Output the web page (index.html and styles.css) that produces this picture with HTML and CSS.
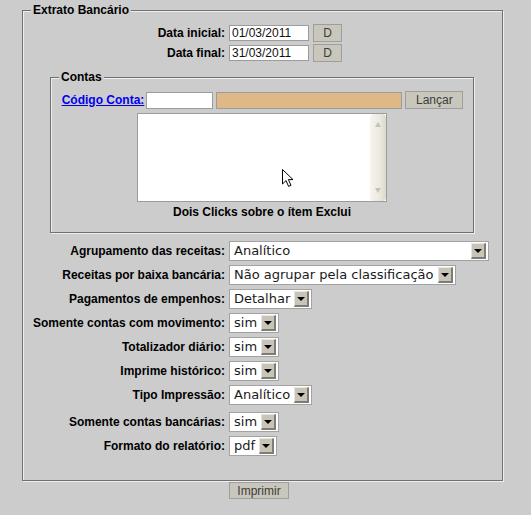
FILE: index.html
```html
<!DOCTYPE html>
<html lang="pt-BR">
<head>
<meta charset="utf-8">
<title>Extrato Bancário</title>
<link rel="stylesheet" href="styles.css">
</head>
<body>
<form class="page">
  <fieldset class="box box-main">
    <legend class="box-title">Extrato Bancário</legend>

    <div class="rows dates">
      <div class="row">
        <label class="lbl">Data inicial:</label>
        <div class="ctl">
          <input class="text-input date" value="01/03/2011">
          <button type="button" class="btn btn-d">D</button>
        </div>
      </div>
      <div class="row">
        <label class="lbl">Data final:</label>
        <div class="ctl">
          <input class="text-input date" value="31/03/2011">
          <button type="button" class="btn btn-d">D</button>
        </div>
      </div>
    </div>

    <fieldset class="box box-contas">
      <legend class="box-title">Contas</legend>
      <div class="conta-row">
        <a href="#" class="lnk">Código Conta:</a>
        <input class="text-input code" value="">
        <span class="text-input desc"></span>
        <button type="button" class="btn btn-lancar">Lançar</button>
      </div>
      <div class="listbox">
        <div class="scrollbar">
          <span class="sb-up"></span>
          <span class="sb-down"></span>
        </div>
        <svg class="cursor" width="13" height="20" viewBox="0 0 13 20">
          <path d="M1.5 1.5 L1.5 16 L5 12.6 L7.6 18.4 L10 17.3 L7.4 11.6 L12 11.6 Z" fill="#fff" stroke="#000" stroke-width="1" stroke-linejoin="miter"/>
        </svg>
      </div>
      <p class="hint">Dois Clicks sobre o ítem Exclui</p>
    </fieldset>

    <div class="rows opts">
      <div class="row">
        <label class="lbl">Agrupamento das receitas:</label>
        <div class="select select-wide"><span class="sel-val">Analítico</span><span class="sel-arrow"></span></div>
      </div>
      <div class="row">
        <label class="lbl">Receitas por baixa bancária:</label>
        <div class="select"><span class="sel-val">Não agrupar pela classificação</span><span class="sel-arrow"></span></div>
      </div>
      <div class="row">
        <label class="lbl">Pagamentos de empenhos:</label>
        <div class="select"><span class="sel-val">Detalhar</span><span class="sel-arrow"></span></div>
      </div>
      <div class="row">
        <label class="lbl">Somente contas com movimento:</label>
        <div class="select"><span class="sel-val">sim</span><span class="sel-arrow"></span></div>
      </div>
      <div class="row">
        <label class="lbl">Totalizador diário:</label>
        <div class="select"><span class="sel-val">sim</span><span class="sel-arrow"></span></div>
      </div>
      <div class="row">
        <label class="lbl">Imprime histórico:</label>
        <div class="select"><span class="sel-val">sim</span><span class="sel-arrow"></span></div>
      </div>
      <div class="row">
        <label class="lbl">Tipo Impressão:</label>
        <div class="select"><span class="sel-val">Analítico</span><span class="sel-arrow"></span></div>
      </div>
      <div class="row row-spaced">
        <label class="lbl">Somente contas bancárias:</label>
        <div class="select"><span class="sel-val">sim</span><span class="sel-arrow"></span></div>
      </div>
      <div class="row">
        <label class="lbl">Formato do relatório:</label>
        <div class="select"><span class="sel-val">pdf</span><span class="sel-arrow"></span></div>
      </div>
    </div>
  </fieldset>

  <button type="button" class="btn btn-print">Imprimir</button>
</form>
</body>
</html>
```

FILE: styles.css
```css
html, body {
  margin: 0;
  padding: 0;
  background: #cccccc;
}

body {
  font-family: "Liberation Sans", Arial, sans-serif;
  font-size: 12px;
  color: #000;
}

.page {
  margin: 0;
  padding: 3px 0 0 22px;
}

.box {
  margin: 0;
  padding: 0;
  min-width: 0;
  border: 1px solid #707070;
  box-shadow: inset 1px 1px 0 #eeeeee, 1px 1px 0 #eeeeee;
}

.box-main {
  width: 481px;
  box-sizing: border-box;
  padding-bottom: 24px;
}

.box-title {
  margin-left: 8px;
  padding: 0 2px;
  font-weight: bold;
  font-size: 12px;
  line-height: 14px;
  background: #cccccc;
}

.rows {
  display: flex;
  flex-direction: column;
}

.row {
  display: flex;
  align-items: center;
  gap: 4px;
}

.dates {
  margin-top: 7px;
}

.dates .row {
  height: 18px;
}

.dates .row + .row {
  margin-top: 2px;
}

.opts {
  margin-top: 8px;
}

.opts .row {
  height: 20px;
}

.opts .row + .row {
  margin-top: 4px;
}

.opts .row.row-spaced {
  margin-top: 7px;
}

.lbl {
  width: 202px;
  flex: none;
  text-align: right;
  font-weight: bold;
  white-space: nowrap;
  line-height: 14px;
}

.ctl {
  display: flex;
  align-items: center;
  gap: 4px;
}

.text-input {
  box-sizing: border-box;
  height: 16px;
  margin: 0;
  padding: 0 2px;
  border: 1px solid #9c9c9c;
  background: #ffffff;
  font-family: "Liberation Sans", Arial, sans-serif;
  font-size: 12px;
  color: #111;
  outline: none;
}

.date {
  width: 80px;
}

.btn {
  box-sizing: border-box;
  margin: 0;
  padding: 0;
  border: 1px solid #9e9e9e;
  background: #c9c7bb;
  font-family: "Liberation Sans", Arial, sans-serif;
  font-size: 12px;
  color: #3c3c3c;
  line-height: 14px;
}

.btn-d {
  width: 29px;
  height: 18px;
}

/* Contas */
.box-contas {
  width: 424px;
  box-sizing: border-box;
  margin: 8px 0 0 27px;
  padding-bottom: 13px;
}

.conta-row {
  display: flex;
  align-items: center;
  justify-content: center;
  margin-top: 7px;
  height: 18px;
}

.lnk {
  font-weight: bold;
  color: #0000ee;
  text-decoration: underline;
  line-height: 14px;
  margin-right: 2px;
  margin-left: 1px;
}

.code {
  width: 67px;
  height: 17px;
  margin-right: 3px;
}

.desc {
  display: block;
  width: 186px;
  height: 17px;
  background: #deb887;
  margin-right: 3px;
}

.btn-lancar {
  width: 58px;
  height: 18px;
}

.listbox {
  position: relative;
  box-sizing: border-box;
  width: 250px;
  height: 89px;
  margin: 4px auto 0;
  border: 1px solid #9c9c9c;
  background: #ffffff;
}

.scrollbar {
  position: absolute;
  top: 0;
  right: 0;
  bottom: 0;
  width: 16px;
  border-radius: 4px;
  background: linear-gradient(to right, #f6f4ee 0%, #ece9e0 60%, #dcd8cc 100%);
  display: flex;
  flex-direction: column;
  justify-content: space-between;
  align-items: center;
  padding: 8px 0;
  box-sizing: border-box;
}

.sb-up,
.sb-down {
  width: 0;
  height: 0;
  border-left: 3px solid transparent;
  border-right: 3px solid transparent;
}

.sb-up {
  border-bottom: 5px solid #c6c2b6;
}

.sb-down {
  border-top: 5px solid #c6c2b6;
}

.cursor {
  position: absolute;
  left: 143px;
  top: 54px;
}

.hint {
  margin: 3px 0 0;
  text-align: center;
  font-weight: bold;
  line-height: 14px;
}

/* Selects */
.select {
  box-sizing: border-box;
  display: flex;
  align-items: center;
  height: 20px;
  border: 1px solid #a3a3a3;
  background: #ffffff;
  padding: 0 2px 0 4px;
  font-family: "DejaVu Sans", Verdana, sans-serif;
  font-size: 13px;
  color: #1a1a1a;
  white-space: nowrap;
}

.select-wide {
  width: 260px;
}

.sel-val {
  flex: 1 1 auto;
  line-height: 16px;
  margin-right: 4px;
}

.sel-arrow {
  position: relative;
  flex: none;
  box-sizing: border-box;
  width: 15px;
  height: 16px;
  background: #c8c5b8;
  border-top: 1px solid #e6e4dc;
  border-left: 1px solid #e6e4dc;
  border-right: 2px solid #7e7c74;
  border-bottom: 2px solid #7e7c74;
}

.sel-arrow::after {
  content: "";
  position: absolute;
  left: 2px;
  top: 5px;
  width: 0;
  height: 0;
  border-left: 4px solid transparent;
  border-right: 4px solid transparent;
  border-top: 4px solid #000;
}

.btn-print {
  display: block;
  width: 60px;
  height: 17px;
  margin: 1px 0 0 207px;
}
```
